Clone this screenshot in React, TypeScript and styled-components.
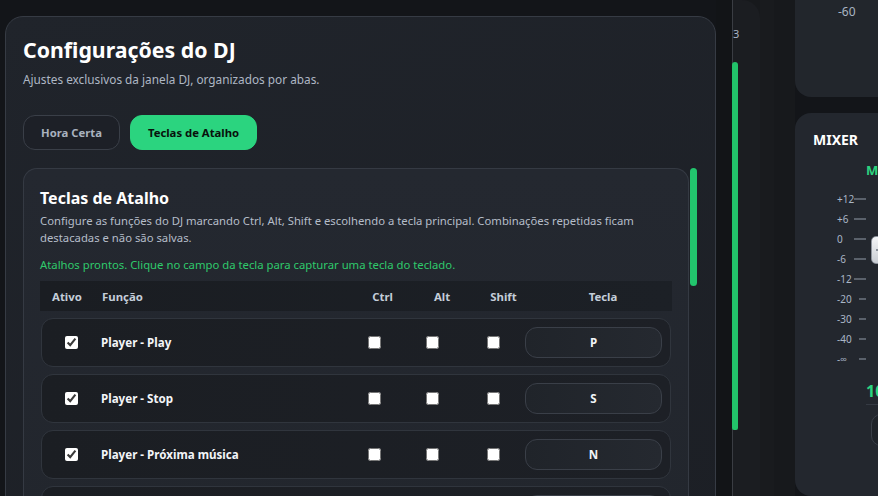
import React from 'react';
import styled, { createGlobalStyle } from 'styled-components';

const GlobalStyle = createGlobalStyle`
  html, body {
    margin: 0;
    padding: 0;
    background: #131519;
    overflow: hidden;
  }
  body {
    font-family: "Segoe UI", "Noto Sans", "Open Sans", sans-serif;
    color: #e8ecf1;
  }
  * { box-sizing: border-box; }
`;

const Page = styled.div`
  display: flex;
  align-items: flex-start;
  width: 878px;
  height: 496px;
  overflow: hidden;
  background: #131519;
`;

const Modal = styled.section`
  flex: 0 0 711px;
  margin: 16px 0 0 5px;
  height: 560px;
  display: flex;
  flex-direction: column;
  padding: 18px 17px 0 17px;
  border: 1px solid #363b44;
  border-radius: 18px;
  background: linear-gradient(160deg, #20242b 0%, #1c1f25 100%);
`;

const Title = styled.h1`
  margin: 0;
  font-size: 21.3px;
  line-height: 30px;
  font-weight: 700;
  color: #ffffff;
`;

const Subtitle = styled.p`
  margin: 6px 0 0;
  font-size: 11.8px;
  line-height: 17px;
  color: #aeb7c4;
`;

const Tabs = styled.div`
  display: flex;
  gap: 10px;
  margin-top: 27px;
`;

const Tab = styled.button<{ $active?: boolean }>`
  height: 35px;
  padding: 0 17px;
  border-radius: 12px;
  font-family: inherit;
  font-size: 11.3px;
  font-weight: 700;
  cursor: pointer;
  border: 1px solid ${p => (p.$active ? '#2bd47f' : '#3a3f48')};
  background: ${p => (p.$active ? '#2bd47f' : '#1d2027')};
  color: ${p => (p.$active ? '#08110c' : '#a9b2bf')};
`;

const Body = styled.div`
  display: flex;
  gap: 1px;
  margin-top: 18px;
`;

const Card = styled.div`
  flex: 1;
  padding: 17px 16px 0 16px;
  border: 1px solid #353a43;
  border-bottom: none;
  border-radius: 14px 14px 0 0;
  background: linear-gradient(180deg, #242830 0%, #22262d 100%);
`;

const ScrollTrack = styled.div`
  flex: 0 0 8px;
`;

const ScrollThumb = styled.div`
  width: 7px;
  height: 118px;
  border-radius: 4px;
  background: #22c56d;
`;

const CardTitle = styled.h2`
  margin: 0;
  font-size: 16px;
  line-height: 24px;
  font-weight: 700;
  color: #ffffff;
`;

const CardText = styled.p`
  margin: 2px 0 0;
  font-size: 11.3px;
  line-height: 17px;
  color: #b5bdc9;
`;

const Status = styled.p`
  margin: 10px 0 0;
  font-size: 11.3px;
  line-height: 17px;
  color: #2fca6c;
`;

const HeaderRow = styled.div`
  display: grid;
  grid-template-columns: 50px 1fr 59px 60px 63px 136px;
  align-items: center;
  height: 30px;
  margin-top: 8px;
  padding: 0 1px 0 12px;
  background: linear-gradient(90deg, #1a1d22 0%, #1c2026 100%);
  font-size: 11.4px;
  font-weight: 700;
  color: #c4cdd9;
`;

const HeadCell = styled.span<{ $center?: boolean }>`
  text-align: ${p => (p.$center ? 'center' : 'left')};
`;

const Rows = styled.div`
  display: flex;
  flex-direction: column;
  gap: 7px;
  margin-top: 7px;
  padding: 0 1px;
`;

const Row = styled.div`
  display: grid;
  grid-template-columns: 59px 1fr 60px 57px 64px 137px;
  align-items: center;
  height: 49px;
  padding-right: 8px;
  border: 1px solid #30353d;
  border-radius: 12px;
  background: linear-gradient(90deg, #1b1e23 0%, #1d2026 100%);
`;

const CheckCell = styled.div`
  display: flex;
  justify-content: center;
  align-items: center;
`;

const Check = styled.input.attrs({ type: 'checkbox' })`
  width: 13px;
  height: 13px;
  margin: 0;
  accent-color: #ffffff;
`;

const ActionName = styled.span`
  font-size: 11.6px;
  font-weight: 700;
  color: #f3f5f8;
`;

const KeyField = styled.div`
  display: flex;
  align-items: center;
  justify-content: center;
  height: 31px;
  border: 1px solid #3a3f48;
  border-radius: 12px;
  background: linear-gradient(90deg, #20242a 0%, #252930 100%);
  font-size: 11.6px;
  font-weight: 700;
  color: #f1f4f7;
`;

/* background panels */

const MeterColumn = styled.div`
  flex: 0 0 79px;
  display: flex;
  height: 496px;
  background: #17191c;
`;

const MeterGap = styled.div`
  flex: 0 0 16px;
  background: #121417;
`;

const MeterTrack = styled.div`
  flex: 0 0 28px;
  display: flex;
  flex-direction: column;
  border-left: 1px solid #3a3d43;
  border-top-right-radius: 18px;
  background: #1b1d21;
`;

const MeterLabel = styled.span`
  margin-top: 26px;
  font-size: 11px;
  line-height: 16px;
  color: #a9b4c4;
`;

const MeterBar = styled.div`
  width: 6px;
  height: 368px;
  margin: 20px 0 0 -1px;
  border-radius: 3px 3px 2px 2px;
  background: #22c26a;
`;

const MeterShade = styled.div`
  flex: 0 0 14px;
  background: #191b1e;
`;

const RightColumn = styled.div`
  flex: 0 0 120px;
  display: flex;
  flex-direction: column;
  gap: 16px;
`;

const TopPanel = styled.div`
  height: 97px;
  padding: 3px 0 0 43px;
  border-radius: 0 0 0 16px;
  background: #22262c;
  font-size: 12px;
  line-height: 18px;
  color: #a9b4c2;
`;

const MixerPanel = styled.div`
  height: 383px;
  padding: 18px 0 0 18px;
  border-radius: 16px 0 0 16px;
  background: #23272e;
`;

const MixerTitle = styled.h3`
  margin: 0;
  font-size: 14px;
  line-height: 18px;
  font-weight: 700;
  color: #ffffff;
`;

const MixerBody = styled.div`
  display: flex;
  margin-top: 12px;
`;

const Scale = styled.div`
  display: flex;
  flex-direction: column;
  margin: 28px 0 0 24px;
  width: 29px;
`;

const ScaleRow = styled.div`
  display: flex;
  align-items: center;
  justify-content: space-between;
  height: 20px;
  font-size: 10px;
  color: #aab6c6;
`;

const Tick = styled.span<{ $long?: boolean }>`
  width: ${p => (p.$long ? '12px' : '7px')};
  height: 1.5px;
  background: #5a616b;
`;

const Channel = styled.div`
  display: flex;
  flex-direction: column;
  width: 80px;
`;

const ChannelName = styled.span`
  font-size: 13px;
  font-weight: 700;
  line-height: 18px;
  color: #2bd47f;
  white-space: nowrap;
`;

const FaderArea = styled.div`
  height: 202px;
  padding: 57px 0 0 5px;
`;

const FaderKnob = styled.div`
  width: 34px;
  height: 28px;
  border-radius: 5px;
  border: 1px solid #8d939c;
  background: linear-gradient(180deg, #f4f5f7 0%, #c9cdd3 100%);
  display: flex;
  align-items: center;
  padding-left: 4px;

  &::before {
    content: '';
    width: 6px;
    height: 2px;
    background: #8a9099;
  }
`;

const ChannelValue = styled.span`
  font-size: 16px;
  font-weight: 700;
  line-height: 20px;
  color: #2bd47f;
`;

const Divider = styled.div`
  height: 1px;
  margin-top: 3px;
  background: #353a43;
`;

const ChannelButton = styled.div`
  height: 32px;
  margin: 9px 0 0 5px;
  border: 1px solid #3a3f48;
  border-radius: 10px;
  background: #1f2329;
`;

const shortcuts = [
  { name: 'Player - Play', key: 'P' },
  { name: 'Player - Stop', key: 'S' },
  { name: 'Player - Próxima música', key: 'N' },
  { name: 'Player - Música anterior', key: 'B' },
];

const scale = [
  { label: '+12', long: true },
  { label: '+6', long: true },
  { label: '0', long: true },
  { label: '-6', long: true },
  { label: '-12', long: true },
  { label: '-20' },
  { label: '-30' },
  { label: '-40' },
  { label: '-∞' },
];

export default function App() {
  return (
    <Page>
      <GlobalStyle />
      <Modal>
        <Title>Configurações do DJ</Title>
        <Subtitle>Ajustes exclusivos da janela DJ, organizados por abas.</Subtitle>
        <Tabs>
          <Tab>Hora Certa</Tab>
          <Tab $active>Teclas de Atalho</Tab>
        </Tabs>
        <Body>
          <Card>
            <CardTitle>Teclas de Atalho</CardTitle>
            <CardText>
              Configure as funções do DJ marcando Ctrl, Alt, Shift e escolhendo a tecla principal. Combinações repetidas ficam destacadas e não são salvas.
            </CardText>
            <Status>Atalhos prontos. Clique no campo da tecla para capturar uma tecla do teclado.</Status>
            <HeaderRow>
              <HeadCell>Ativo</HeadCell>
              <HeadCell>Função</HeadCell>
              <HeadCell $center>Ctrl</HeadCell>
              <HeadCell $center>Alt</HeadCell>
              <HeadCell $center>Shift</HeadCell>
              <HeadCell $center>Tecla</HeadCell>
            </HeaderRow>
            <Rows>
              {shortcuts.map(s => (
                <Row key={s.name}>
                  <CheckCell><Check defaultChecked /></CheckCell>
                  <ActionName>{s.name}</ActionName>
                  <CheckCell><Check /></CheckCell>
                  <CheckCell><Check /></CheckCell>
                  <CheckCell><Check /></CheckCell>
                  <KeyField>{s.key}</KeyField>
                </Row>
              ))}
            </Rows>
          </Card>
          <ScrollTrack>
            <ScrollThumb />
          </ScrollTrack>
        </Body>
      </Modal>

      <MeterColumn>
        <MeterGap />
        <MeterTrack>
          <MeterLabel>3</MeterLabel>
          <MeterBar />
        </MeterTrack>
        <MeterShade />
      </MeterColumn>

      <RightColumn>
        <TopPanel>-60</TopPanel>
        <MixerPanel>
          <MixerTitle>MIXER</MixerTitle>
          <MixerBody>
            <Scale>
              {scale.map(s => (
                <ScaleRow key={s.label}>
                  <span>{s.label}</span>
                  <Tick $long={s.long} />
                </ScaleRow>
              ))}
            </Scale>
            <Channel>
              <ChannelName>MASTER</ChannelName>
              <FaderArea>
                <FaderKnob />
              </FaderArea>
              <ChannelValue>100%</ChannelValue>
              <Divider />
              <ChannelButton />
            </Channel>
          </MixerBody>
        </MixerPanel>
      </RightColumn>
    </Page>
  );
}
